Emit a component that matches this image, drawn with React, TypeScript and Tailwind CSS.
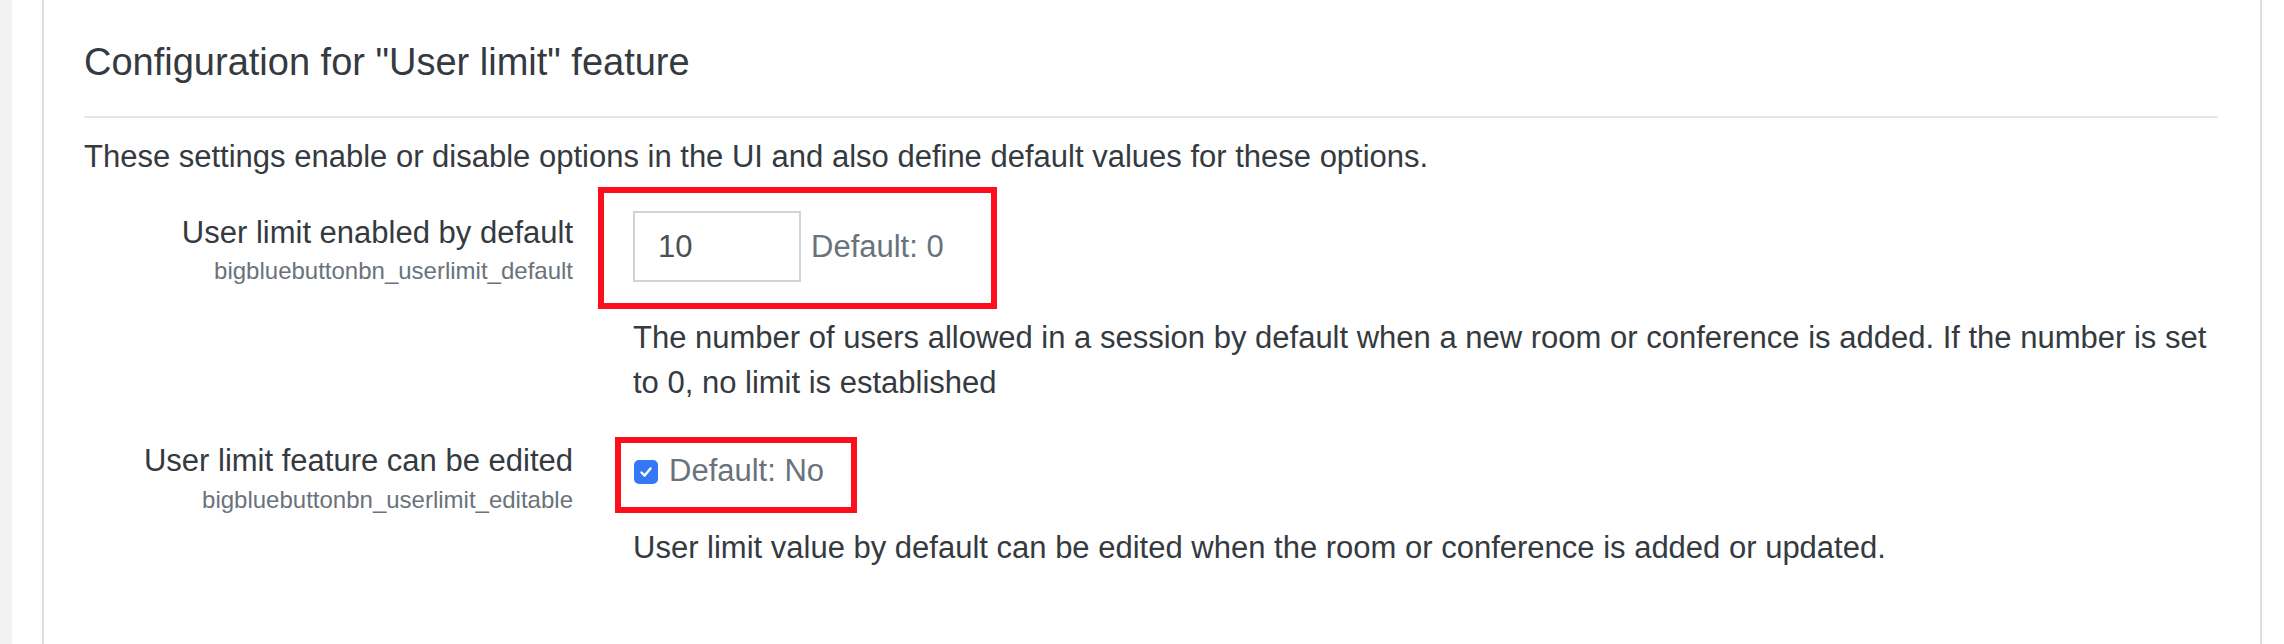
import React from "react";

export default function App() {
  const font = { fontFamily: '"Liberation Sans", Arial, sans-serif' };
  return (
    <div
      className="flex h-[644px] w-full overflow-hidden bg-white text-[#343a40]"
      style={font}
    >
      <div className="w-[12px] shrink-0 bg-[#f2f2f2]" />
      <div className="w-[30px] shrink-0 bg-white" />
      <div className="flex-1 border-x-2 border-[#dfdfdf] pl-[40px] pr-[42px] pt-[39px]">
        <h3 className="text-[38px] leading-[46px] font-normal text-[#343a40] whitespace-nowrap">
          Configuration for "User limit" feature
        </h3>
        <div className="mt-[31px] border-t-2 border-[#e6e6e6]" />
        <p className="mt-[16px] text-[31px] leading-[45px] whitespace-nowrap">
          These settings enable or disable options in the UI and also define default values for these options.
        </p>

        {/* Row 1 */}
        <div className="mt-[31px] flex">
          <div className="w-[489px] shrink-0 text-right">
            <div className="text-[31px] leading-[45px] whitespace-nowrap">User limit enabled by default</div>
            <div className="mt-[5px] text-[24px] leading-[22px] text-[#6a737b] whitespace-nowrap">
              bigbluebuttonbn_userlimit_default
            </div>
          </div>
          <div className="relative ml-[60px] flex-1 pt-[1px]">
            <div className="flex items-center">
              <input
                type="text"
                readOnly
                defaultValue="10"
                className="h-[71px] w-[168px] border-2 border-[#ced4da] bg-white pl-[23px] text-[31px] text-[#495057] outline-none"
                style={font}
              />
              <span className="ml-[10px] text-[31px] leading-[45px] text-[#6a737b] whitespace-nowrap">
                Default: 0
              </span>
            </div>
            <div className="mt-[33px] text-[31px] leading-[45px] whitespace-nowrap">
              The number of users allowed in a session by default when a new room or conference is added. If the number is set
              <br />
              to 0, no limit is established
            </div>
            <div className="pointer-events-none absolute left-[-35px] top-[-23px] h-[122px] w-[399px] border-[6px] border-[#fd0e1c]" />
          </div>
        </div>

        {/* Row 2 */}
        <div className="mt-[33px] flex">
          <div className="w-[489px] shrink-0 text-right">
            <div className="text-[31px] leading-[45px] whitespace-nowrap">User limit feature can be edited</div>
            <div className="mt-[6px] text-[24px] leading-[22px] text-[#6a737b] whitespace-nowrap">
              bigbluebuttonbn_userlimit_editable
            </div>
          </div>
          <div className="relative ml-[60px] flex-1 pt-[10px]">
            <div className="flex items-start">
              <div className="ml-[1px] mt-[12px] flex h-[24px] w-[24px] items-center justify-center rounded-[5px] bg-[#3478f6]">
                <svg width="16" height="16" viewBox="0 0 16 16" fill="none">
                  <path
                    d="M3.5 8.5 L6.6 11.6 L12.5 4.5"
                    stroke="white"
                    strokeWidth="2.4"
                    strokeLinecap="round"
                    strokeLinejoin="round"
                  />
                </svg>
              </div>
              <span className="ml-[11px] text-[31px] leading-[45px] text-[#6a737b] whitespace-nowrap">
                Default: No
              </span>
            </div>
            <div className="mt-[32px] text-[31px] leading-[45px] whitespace-nowrap">
              User limit value by default can be edited when the room or conference is added or updated.
            </div>
            <div className="pointer-events-none absolute left-[-18px] top-[-1px] h-[76px] w-[242px] border-[6px] border-[#fd0e1c]" />
          </div>
        </div>
      </div>
      <div className="w-[22px] shrink-0 bg-white" />
    </div>
  );
}
